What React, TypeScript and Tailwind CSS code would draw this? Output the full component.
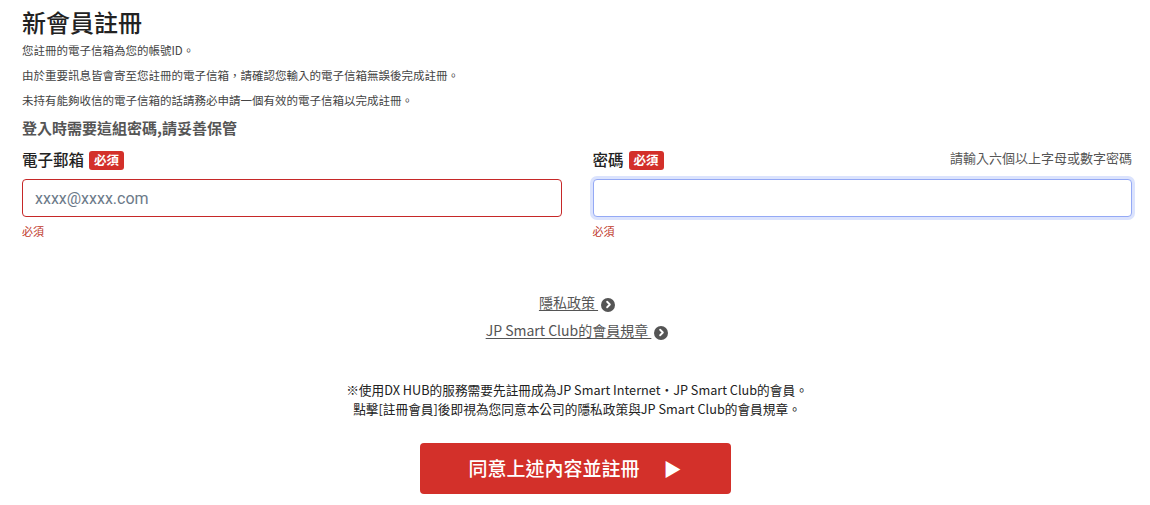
import { ChevronRight } from 'lucide-react';

const cjk = "font-['Noto_Sans_CJK_TC','Noto_Sans_CJK_JP',sans-serif]";

function Badge() {
  return (
    <span className="ml-[5px] inline-flex h-[19px] items-center rounded-[3px] bg-[#d3302a] px-[5px] text-[12.5px] font-bold leading-none text-white">
      必須
    </span>
  );
}

function CircleArrow() {
  return (
    <span className="ml-[3px] inline-flex h-[14px] w-[14px] items-center justify-center rounded-full bg-[#555] align-[-2px]">
      <ChevronRight className="ml-[1px] h-[11px] w-[11px] text-white" strokeWidth={4} />
    </span>
  );
}

export default function App() {
  return (
    <div className={`${cjk} min-h-[505px] bg-white pl-[22px] pr-[18px] text-[#222]`}>
      <h1 className="pt-[5px] text-[24px] font-medium leading-[34px] text-[#222]">新會員註冊</h1>

      <div className="mt-[2px] space-y-[7px] text-[11.5px] leading-[18px] text-[#444]">
        <p>您註冊的電子信箱為您的帳號ID。</p>
        <p>由於重要訊息皆會寄至您註冊的電子信箱，請確認您輸入的電子信箱無誤後完成註冊。</p>
        <p>未持有能夠收信的電子信箱的話請務必申請一個有效的電子信箱以完成註冊。</p>
      </div>

      <h2 className="mt-[7px] text-[15px] font-bold leading-[24px] text-[#555]">登入時需要這組密碼,請妥善保管</h2>

      <div className="mt-[8px] grid grid-cols-2 gap-x-[31px]">
        <div>
          <div className="flex h-[24px] items-center">
            <span className="text-[15.5px] font-medium text-[#222]">電子郵箱</span>
            <Badge />
          </div>
          <input
            type="text"
            placeholder="xxxx@xxxx.com"
            className="mt-[7px] h-[38px] w-full rounded-[4px] border border-[#c62828] bg-white px-[12px] font-['Roboto',sans-serif] text-[16px] text-[#222] outline-none placeholder:text-[#6c7a89]"
          />
          <p className="mt-[6px] text-[11px] leading-[16px] text-[#c0392b]">必須</p>
        </div>
        <div>
          <div className="flex h-[24px] items-center">
            <span className="text-[15.5px] font-medium text-[#222]">密碼</span>
            <Badge />
            <span className="ml-auto self-start text-[13px] text-[#555]">請輸入六個以上字母或數字密碼</span>
          </div>
          <input
            type="password"
            className="mt-[7px] h-[38px] w-full rounded-[4px] border border-[#94a9f5] bg-white px-[12px] text-[16px] outline-none ring-[3px] ring-[#dbe3fd]"
          />
          <p className="mt-[6px] text-[11px] leading-[16px] text-[#c0392b]">必須</p>
        </div>
      </div>

      <div className="mt-[53px] flex flex-col items-center gap-[8px] text-[14px] leading-[20px] text-[#555]">
        <a href="#" className="underline underline-offset-2">
          隱私政策 <CircleArrow />
        </a>
        <a href="#" className="underline underline-offset-2">
          JP Smart Club的會員規章 <CircleArrow />
        </a>
      </div>

      <div className="mt-[40px] text-center text-[12.7px] leading-[19px] text-[#222]">
        <p>※使用DX HUB的服務需要先註冊成為JP Smart Internet・JP Smart Club的會員。</p>
        <p>點擊[註冊會員]後即視為您同意本公司的隱私政策與JP Smart Club的會員規章。</p>
      </div>

      <div className="mt-[25px] flex justify-center pr-[4px]">
        <button className="flex h-[51px] w-[311px] items-center justify-center rounded-[4px] bg-[#d3302a] text-[19px] font-medium text-white">
          同意上述內容並註冊
          <span className="ml-[24px] text-[18px]">▶</span>
        </button>
      </div>
    </div>
  );
}
